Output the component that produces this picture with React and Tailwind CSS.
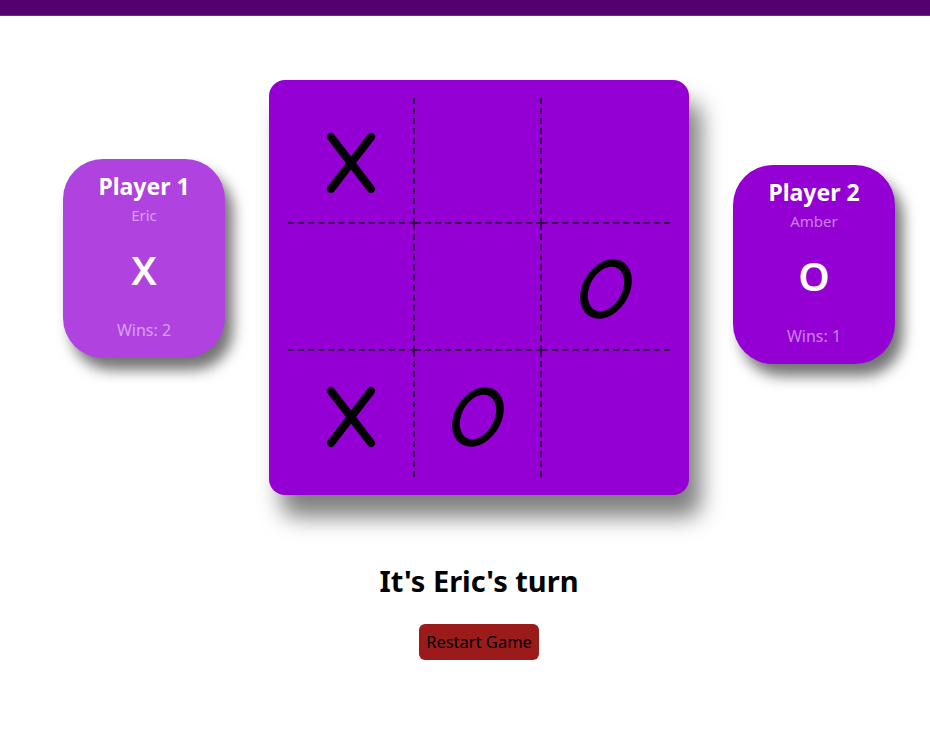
const board = ['X', '', '', '', '', 'O', 'X', 'O', ''];

function XMark() {
  return (
    <svg width="56" height="68" viewBox="0 0 56 68" className="mt-[6px]">
      <line x1="8" y1="8" x2="48" y2="60" stroke="#000" strokeWidth="8" strokeLinecap="round" />
      <line x1="48" y1="8" x2="8" y2="60" stroke="#000" strokeWidth="8" strokeLinecap="round" />
    </svg>
  );
}

// slanted O mark
function OMark() {
  return (
    <svg width="60" height="66" viewBox="0 0 60 66" className="mt-[5px]">
      <g transform="translate(30 33) skewX(-12) rotate(6)">
        <ellipse cx="0" cy="0" rx="21" ry="26" fill="none" stroke="#000" strokeWidth="7.5" />
      </g>
    </svg>
  );
}

function PlayerCard({ title, name, mark, wins, light, offset }) {
  return (
    <div
      className={`w-[162px] h-[199px] rounded-[40px] flex flex-col items-center pt-[12px] text-white shadow-[8px_12px_14px_rgba(0,0,0,0.55)] ${light ? 'bg-[#b042df]' : 'bg-[#9400d3]'} ${offset}`}
    >
      <div className="text-[23px] leading-[30px] font-bold">{title}</div>
      <div className="text-[15px] leading-[20px] mt-[4px] text-white/50">{name}</div>
      <div className="text-[40px] leading-[50px] mt-[20px] font-semibold">{mark}</div>
      <div className="text-[16px] leading-[20px] mt-[25px] text-white/50">Wins: {wins}</div>
    </div>
  );
}

export default function App() {
  return (
    <div className="min-h-[735px] bg-white" style={{ fontFamily: '"Noto Sans", sans-serif' }}>
      <div className="h-[16px] bg-[#54006e] border-b border-[#6a2a84]" />
      <div className="flex flex-col items-center pl-[28px]">
        <div className="flex items-start gap-[44px] mt-[64px]">
          <PlayerCard title="Player 1" name="Eric" mark="X" wins={2} light offset="mt-[79px]" />
          <div className="w-[420px] h-[415px] bg-[#9400d3] rounded-[16px] px-[19px] pt-[18px] shadow-[12px_22px_22px_rgba(0,0,0,0.5)]">
            <div className="grid grid-cols-[127px_127px_128px] grid-rows-[126px_127px_126px]">
              {board.map((cell, i) => {
                const col = i % 3;
                const row = Math.floor(i / 3);
                return (
                  <div
                    key={i}
                    className={`flex items-center justify-center border-dashed border-[#3a0650] ${col < 2 ? 'border-r-2' : ''} ${row < 2 ? 'border-b-2' : ''}`}
                  >
                    {cell === 'X' && <XMark />}
                    {cell === 'O' && <OMark />}
                  </div>
                );
              })}
            </div>
          </div>
          <PlayerCard title="Player 2" name="Amber" mark="O" wins={1} offset="mt-[85px]" />
        </div>
        <h2 className="mt-[68px] text-[29px] leading-[36px] font-bold text-black">It's Eric's turn</h2>
        <button className="mt-[25px] w-[120px] h-[36px] rounded-[6px] bg-[#9b1b1b] text-black text-[16.5px]">
          Restart Game
        </button>
      </div>
    </div>
  );
}
